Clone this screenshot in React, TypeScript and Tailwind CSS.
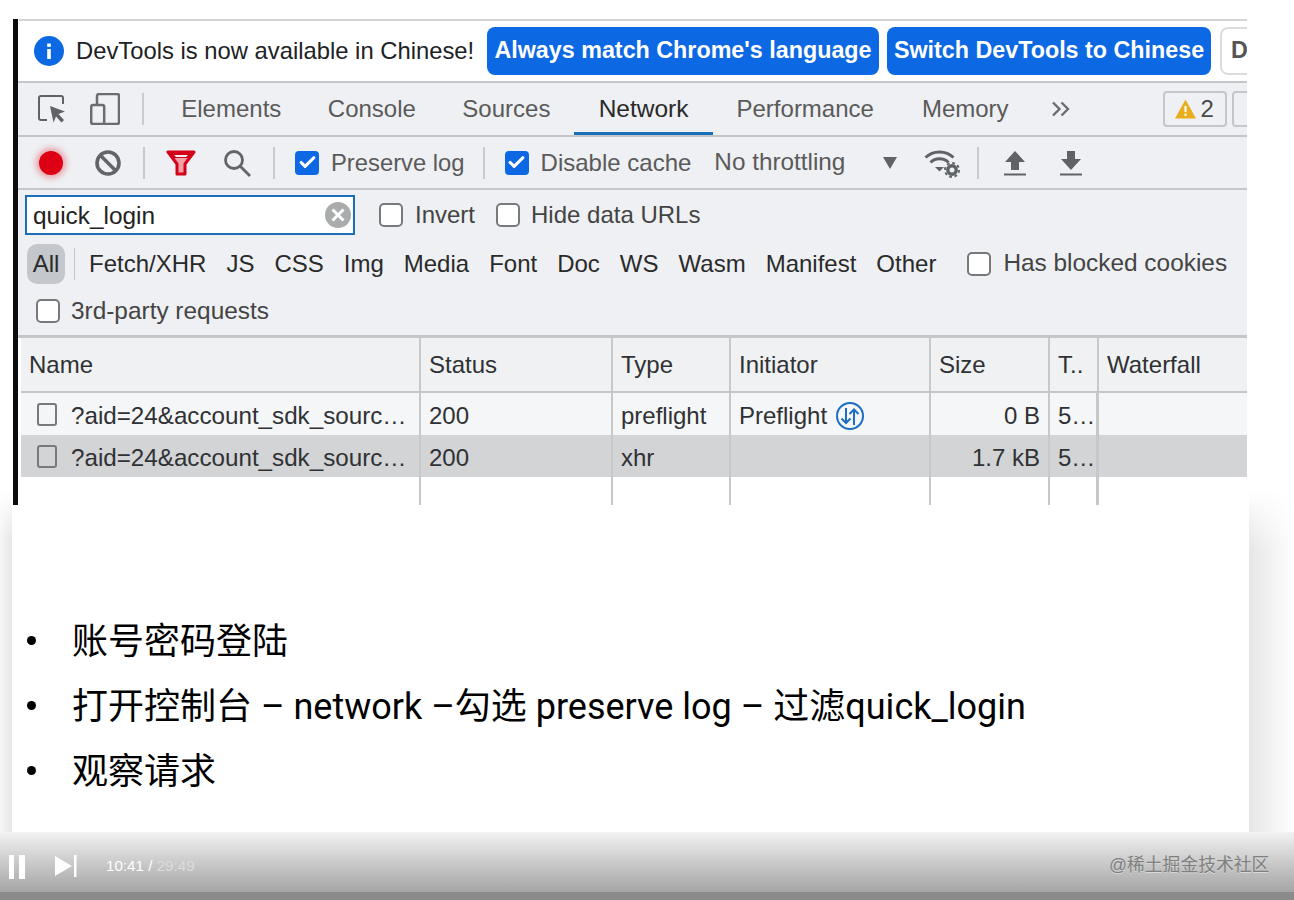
import { Check } from "lucide-react";

const tabs = ["Elements", "Console", "Sources", "Network", "Performance", "Memory"];
const chips = ["Fetch/XHR", "JS", "CSS", "Img", "Media", "Font", "Doc", "WS", "Wasm", "Manifest", "Other"];
const rowName = "?aid=24&account_sdk_source=sso&language=zh";

function Box({ checked = false, className = "" }: { checked?: boolean; className?: string }) {
  if (checked) {
    return (
      <span className={`flex h-[24px] w-[24px] shrink-0 items-center justify-center rounded-[4px] bg-[#0d68e3] ${className}`}>
        <Check className="h-[19px] w-[19px] text-white" strokeWidth={4} />
      </span>
    );
  }
  return <span className={`block h-[24px] w-[24px] shrink-0 rounded-[5px] border-2 border-[#77797c] bg-white ${className}`} />;
}

function Divider({ className = "" }: { className?: string }) {
  return <span className={`block h-[32px] w-[2px] shrink-0 bg-[#c8cacd] ${className}`} />;
}

function tabClass(t: string) {
  if (t === "Network") return "border-b-[3px] border-[#1a6fb8] pl-[25px] pr-[24px] pt-[3px] text-[24.5px] text-[#2a2a2a]";
  if (t === "Performance" || t === "Memory") return "px-[24px]";
  return "px-[23.250px]";
}

function HeaderCell({ label, border = true }: { label: string; border?: boolean }) {
  return (
    <div className={`flex items-center overflow-hidden whitespace-nowrap px-[8px] ${border ? "border-r-2 border-[#c6c8ca]" : ""}`}>
      {label}
    </div>
  );
}

function NameCell({ gray = false }: { gray?: boolean }) {
  return (
    <div className="flex min-w-0 items-center border-r-2 border-[#c6c8ca] pl-[16px] pr-[8px]">
      <span className={`block h-[23px] w-[20px] shrink-0 rounded-[3px] border-2 border-[#77797c] ${gray ? "bg-[#d2d4d6]" : "bg-[#f4f5f6]"}`} />
      <span className="ml-[14px] min-w-0 truncate pt-[3px] text-[24.2px] leading-[30px]">{rowName}</span>
    </div>
  );
}

function Cell({ children, right = false, wide = false }: { children?: React.ReactNode; right?: boolean; wide?: boolean }) {
  return (
    <div className={`flex min-w-0 items-center overflow-hidden whitespace-nowrap px-[8px] pt-[3px] ${wide ? "border-r-[3px]" : "border-r-2"} border-[#c6c8ca] ${right ? "justify-end" : ""}`}>
      {children}
    </div>
  );
}

export default function App() {
  return (
    <div className="relative h-[900px] w-[1294px] overflow-hidden bg-white font-['Liberation_Sans','Noto_Sans_CJK_SC',sans-serif]">
      <div className="pl-[13px] pt-[19px]">
        {/* devtools screenshot */}
        <div className="flex h-[486px] w-[1234px] overflow-hidden border-l-[5px] border-[#0b0b10] text-[24px] leading-none">
          <div className="w-[1229px] shrink-0 bg-white">
            <div className="ml-[1px] h-[2px] bg-[#d4d4d4]" />

            {/* language infobar */}
            <div className="flex h-[60px] items-center whitespace-nowrap text-[#202124]">
              <svg viewBox="0 0 30 30" className="ml-[16px] h-[30px] w-[30px] shrink-0">
                <circle cx="15" cy="15" r="15" fill="#0d68e3" />
                <rect x="13.2" y="13" width="3.6" height="10" fill="#fff" />
                <rect x="13.2" y="7.5" width="3.6" height="3.4" fill="#fff" />
              </svg>
              <span className="ml-[12px] w-[410px] shrink-0 text-[23.8px]">DevTools is now available in Chinese!</span>
              <span className="ml-[1px] flex h-[48px] w-[392px] shrink-0 items-center justify-center rounded-[8px] bg-[#0d68e3] text-[23.3px] font-bold text-white">
                Always match Chrome's language
              </span>
              <span className="ml-[8px] flex h-[48px] w-[324px] shrink-0 items-center justify-center rounded-[8px] bg-[#0d68e3] text-[23.3px] font-bold text-white">
                Switch DevTools to Chinese
              </span>
              <span className="ml-[9px] flex h-[48px] w-[60px] shrink-0 items-center rounded-[8px] border-2 border-[#dcdcdc] pl-[9px] text-[23.3px] font-bold text-[#555]">
                D
              </span>
            </div>

            {/* main tabs */}
            <div className="flex h-[56px] items-center border-y-2 border-[#c4c6c9] bg-[#eef0f3] text-[#5a5a5a]">
              <svg viewBox="0 0 28 28" className="ml-[20px] h-[28px] w-[28px] shrink-0" fill="none">
                <path d="M9 25H3a2 2 0 0 1-2-2V3a2 2 0 0 1 2-2h20a2 2 0 0 1 2 2v6" stroke="#5f6368" strokeWidth="2" />
                <path d="M12 11l15 5.5-6.5 2.5 5.5 6-2.5 2.5-5.5-6-2.500 6z" fill="#5f6368" />
              </svg>
              <svg viewBox="0 0 30 32" className="ml-[24px] h-[32px] w-[30px] shrink-0" fill="none" stroke="#6a6d70" strokeWidth="2.500">
                <path d="M7 12V3a2 2 0 0 1 2-2h18a2 2 0 0 1 2 2v26a2 2 0 0 1-2 2H14" />
                <rect x="1.200" y="12" width="13" height="19" rx="2" />
              </svg>
              <Divider className="ml-[22px]" />
              <div className="ml-[14px] flex h-full items-center">
                {tabs.map((t) => (
                  <span key={t} className={`flex h-full items-center whitespace-nowrap ${tabClass(t)}`}>
                    {t}
                  </span>
                ))}
              </div>
              <svg viewBox="0 0 20 16" className="ml-[18px] h-[16px] w-[20px] shrink-0" fill="none" stroke="#6a6d70" strokeWidth="2.400">
                <path d="M2 1.500 8.500 8 2 14.500M10.500 1.500 17 8l-6.500 6.500" />
              </svg>
              <span className="ml-[92px] flex h-[36px] w-[64px] shrink-0 items-center justify-center gap-[4px] rounded-[4px] border-2 border-[#c4c6c9] text-[#4a4a4a]">
                <svg viewBox="0 0 20 18" className="h-[20px] w-[21px]">
                  <path d="M10 0 20 18H0z" fill="#e8ae1e" />
                  <rect x="9" y="6" width="2" height="6" fill="#fff" />
                  <rect x="9" y="13.500" width="2" height="2" fill="#fff" />
                </svg>
                2
              </span>
              <span className="ml-[5px] h-[36px] w-[30px] shrink-0 rounded-[4px] border-2 border-[#c4c6c9]" />
            </div>

            {/* network toolbar */}
            <div className="flex h-[53px] items-center border-b-2 border-[#c4c6c9] bg-[#eef0f3] text-[#5a5a5a]">
              <span className="ml-[21px] block h-[24px] w-[24px] shrink-0 rounded-full bg-[#dd0014] shadow-[0_0_6px_3px_rgba(221,0,20,0.35)]" />
              <svg viewBox="0 0 26 26" className="ml-[32px] h-[26px] w-[26px] shrink-0" fill="none" stroke="#626568" strokeWidth="3.600">
                <circle cx="13" cy="13" r="11" />
                <path d="M5.500 5.500l15 15" />
              </svg>
              <Divider className="ml-[22px]" />
              <svg viewBox="0 0 30 26" className="ml-[21px] h-[26px] w-[30px] shrink-0">
                <path d="M2 2h26L19 14v10h-8V14z" fill="#f3a0a6" stroke="#d4001a" strokeWidth="3" strokeLinejoin="round" />
                <path d="M2 2h26l-5 6H7z" fill="#d4001a" />
                <path d="M8 5h14l-2 2H10z" fill="#eef0f3" />
              </svg>
              <svg viewBox="0 0 28 28" className="ml-[27px] h-[28px] w-[28px] shrink-0" fill="none" stroke="#626568" strokeWidth="2.800">
                <circle cx="11" cy="11" r="8.500" />
                <path d="M17.500 17.500 27 27" />
              </svg>
              <Divider className="ml-[22px]" />
              <Box checked className="ml-[20px]" />
              <span className="ml-[12px] whitespace-nowrap text-[23.8px]">Preserve log</span>
              <Divider className="ml-[18px]" />
              <Box checked className="ml-[20px]" />
              <span className="ml-[12px] whitespace-nowrap">Disable cache</span>
              <span className="ml-[23px] whitespace-nowrap text-[24.3px]">No throttling</span>
              <svg viewBox="0 0 14 12" className="ml-[38px] h-[12px] w-[14px] shrink-0">
                <path d="M0 0h14L7 12z" fill="#5f6368" />
              </svg>
              <svg viewBox="0 0 36 30" className="ml-[27px] h-[30px] w-[36px] shrink-0" fill="none">
                <path d="M1.500 9.500C9 2 22 2 29.500 9.500M6.500 14.500c5-5 13-5 18 0" stroke="#5f6368" strokeWidth="3" />
                <path d="M11 19h9l-4.500 4.500z" fill="#5f6368" />
                <circle cx="28" cy="22" r="4.200" stroke="#5f6368" strokeWidth="3.400" />
                <circle cx="28" cy="22" r="7" stroke="#5f6368" strokeWidth="2" strokeDasharray="2.800 2.700" />
              </svg>
              <Divider className="ml-[17px]" />
              <svg viewBox="0 0 24 26" className="ml-[24px] h-[26px] w-[24px] shrink-0">
                <path d="M12 1 22 12h-6v8H8v-8H2z" fill="#5f6368" />
                <rect x="1" y="23.500" width="22" height="2" fill="#5f6368" />
              </svg>
              <svg viewBox="0 0 24 26" className="ml-[32px] h-[26px] w-[24px] shrink-0">
                <path d="M8 1h8v8h6L12 20 2 9h6z" fill="#5f6368" />
                <rect x="1" y="23.500" width="22" height="2" fill="#5f6368" />
              </svg>
            </div>

            {/* filter rows */}
            <div className="h-[148px] border-b-[3px] border-[#c4c6c9] bg-[#eef0f3] text-[#444]">
              <div className="flex h-[50px] items-center">
                <div className="ml-[7px] flex h-[40px] w-[330px] shrink-0 items-center justify-between border-2 border-[#1a6fb8] bg-white pl-[6px] pr-[2px] text-[24.4px] text-[#222]">
                  <span className="pt-[3px]">quick_login</span>
                  <svg viewBox="0 0 26 26" className="h-[26px] w-[26px]" fill="none">
                    <circle cx="13" cy="13" r="13" fill="#a9abad" />
                    <path d="M7.500 7.500l11 11M18.500 7.500l-11 11" stroke="#fff" strokeWidth="3" />
                  </svg>
                </div>
                <Box className="ml-[24px]" />
                <span className="ml-[12px]">Invert</span>
                <Box className="ml-[21px]" />
                <span className="ml-[11px] whitespace-nowrap">Hide data URLs</span>
              </div>
              <div className="flex h-[47px] items-center text-[#2a2a2a]">
                <span className="ml-[9px] flex h-[40px] w-[38px] shrink-0 items-center justify-center rounded-[10px] bg-[#c4c7cb]">All</span>
                <span className="ml-[9px] block h-[32px] w-[1px] shrink-0 bg-[#c4c6c9]" />
                <div className="ml-[14px] flex gap-[20px] whitespace-nowrap">
                  {chips.map((c) => (
                    <span key={c}>{c}</span>
                  ))}
                </div>
                <Box className="ml-[31px]" />
                <span className="ml-[12px] whitespace-nowrap text-[24.4px] text-[#444]">Has blocked cookies</span>
              </div>
              <div className="flex h-[48px] items-center">
                <Box className="ml-[18px]" />
                <span className="ml-[11px] whitespace-nowrap text-[24.4px]">3rd-party requests</span>
              </div>
            </div>

            {/* request table */}
            <div className="ml-[3px] grid grid-cols-[400px_192px_118px_200px_119px_49px_1fr] grid-rows-[55px_42px_42px_28px] text-[#303134]">
              <div className="col-span-7 grid grid-cols-subgrid border-b-2 border-[#c4c6c9] bg-[#eff1f3]">
                <HeaderCell label="Name" />
                <HeaderCell label="Status" />
                <HeaderCell label="Type" />
                <HeaderCell label="Initiator" />
                <HeaderCell label="Size" />
                <HeaderCell label="T.." />
                <HeaderCell label="Waterfall" border={false} />
              </div>
              <div className="col-span-7 grid grid-cols-subgrid bg-[#f5f6f7]">
                <NameCell />
                <Cell>200</Cell>
                <Cell>preflight</Cell>
                <Cell>
                  Preflight
                  <svg viewBox="0 0 28 28" className="ml-[9px] h-[28px] w-[28px] shrink-0" fill="none" stroke="#1a6fc4" strokeWidth="2">
                    <circle cx="14" cy="14" r="13" />
                    <path d="M10 6v15M5.500 16.500 10 21l4.500-4.500M18 23V8M13.500 12 18 7.500l4.500 4.500" />
                  </svg>
                </Cell>
                <Cell right>0 B</Cell>
                <Cell wide>5…</Cell>
                <div />
              </div>
              <div className="col-span-7 grid grid-cols-subgrid bg-[#d2d4d6]">
                <NameCell gray />
                <Cell>200</Cell>
                <Cell>xhr</Cell>
                <Cell />
                <Cell right>1.7 kB</Cell>
                <Cell wide>5…</Cell>
                <div />
              </div>
              <div className="col-span-7 grid grid-cols-subgrid">
                <Cell />
                <Cell />
                <Cell />
                <Cell />
                <Cell />
                <Cell wide />
                <div />
              </div>
            </div>
          </div>
        </div>
      </div>

      {/* slide bullets */}
      <ul className="ml-[27px] mt-[103px] font-['Roboto','Noto_Sans_CJK_SC',sans-serif] text-[36px] leading-[65px] text-black">
        {["账号密码登陆", "打开控制台 – network –勾选 preserve log – 过滤quick_login", "观察请求"].map((line) => (
          <li key={line} className="flex h-[65px] items-center whitespace-nowrap">
            <span className="block h-[9px] w-[9px] shrink-0 rounded-full bg-black" />
            <span className="ml-[36px] pt-[4px]">{line}</span>
          </li>
        ))}
      </ul>

      {/* page edge shading */}
      <div className="absolute bottom-[68px] left-0 top-[490px] w-[12px] bg-linear-to-l from-[#e6e6e6] to-[#f6f6f6]" />
      <div className="absolute bottom-[68px] left-[1249px] right-0 top-[490px] bg-linear-to-r from-[#e6e6e6] to-white" />
      <div className="absolute left-0 top-[490px] h-[50px] w-[12px] bg-linear-to-b from-white to-transparent" />
      <div className="absolute left-[1249px] right-0 top-[490px] h-[60px] bg-linear-to-b from-white to-transparent" />

      {/* player bar */}
      <div className="absolute inset-x-0 bottom-0 h-[68px] bg-linear-to-b from-[#f2f2f2] to-[#9b9b9b]">
        <svg viewBox="0 0 18 24" className="absolute left-[8px] top-[23px] h-[24px] w-[18px]" fill="#fff">
          <rect x="1" width="5" height="24" />
          <rect x="11" width="6" height="24" />
        </svg>
        <svg viewBox="0 0 22 22" className="absolute left-[55px] top-[23px] h-[22px] w-[22px]" fill="#fff">
          <path d="M0 1 17 11 0 21z" />
          <rect x="19" width="2.500" height="22" />
        </svg>
        <span className="absolute left-[106px] top-[25px] text-[15.2px] leading-[18px] text-white">
          10:41 / <span className="text-[#dcdcdc]">29:49</span>
        </span>
        <span className="absolute left-[1109px] top-[21px] text-[17.800px] leading-[24px] text-[#808080] [text-shadow:0_1px_0_#d8d8d8]">
          @稀土掘金技术社区
        </span>
        <div className="absolute inset-x-0 bottom-0 h-[8px] bg-[#8b8b8b]" />
      </div>
    </div>
  );
}
